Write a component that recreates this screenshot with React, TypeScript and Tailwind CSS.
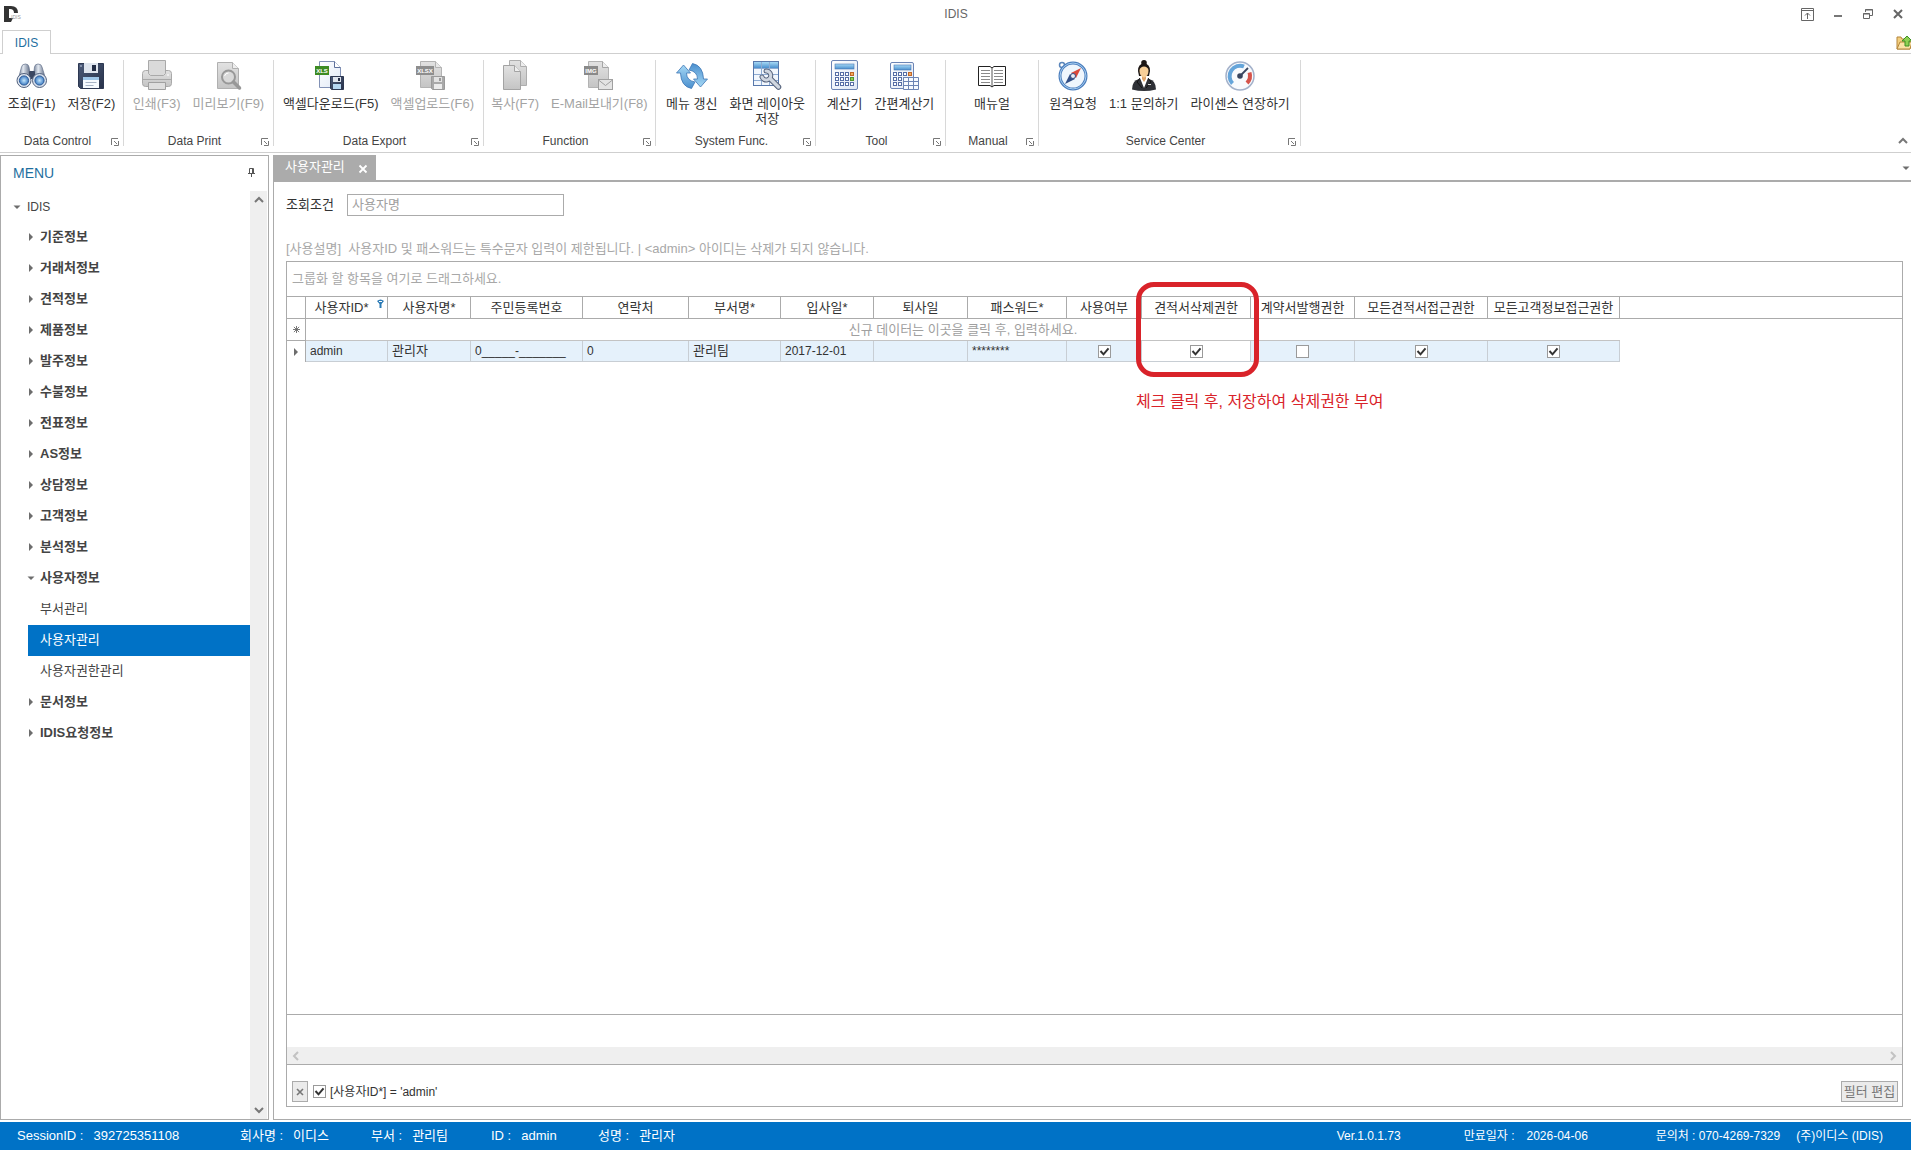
import React, { useState } from "react";
import clsx from "clsx";

interface IRibbonItem {
  label: string;
  icon: React.ReactNode;
  disabled?: boolean;
}

interface IRibbonGroup {
  title: string;
  width: string;
  items: IRibbonItem[];
}

interface IColumn {
  title: string;
  width: string;
  value: string | boolean;
}

function Icon({ children }: { children: React.ReactNode }) {
  return (
    <svg viewBox="0 0 32 32" className="size-8 shrink-0" fill="none">
      {children}
    </svg>
  );
}

function Gradients() {
  return (
    <svg width="0" height="0" className="absolute" aria-hidden="true">
      <defs>
        <linearGradient id="steel" x1="0" y1="0" x2="1" y2="0">
          <stop offset="0" stopColor="#5f6d86" />
          <stop offset="0.4" stopColor="#e3e9f1" />
          <stop offset="1" stopColor="#4c5a75" />
        </linearGradient>
        <radialGradient id="lens">
          <stop offset="0" stopColor="#c4e6fb" />
          <stop offset="1" stopColor="#3d7cc4" />
        </radialGradient>
        <linearGradient id="navy" x1="0" y1="0" x2="1" y2="1">
          <stop offset="0" stopColor="#4b5a78" />
          <stop offset="1" stopColor="#28324a" />
        </linearGradient>
        <linearGradient id="grey" x1="0" y1="0" x2="0" y2="1">
          <stop offset="0" stopColor="#e2e2e2" />
          <stop offset="1" stopColor="#c4c4c4" />
        </linearGradient>
        <linearGradient id="sky" x1="0" y1="0" x2="0" y2="1">
          <stop offset="0" stopColor="#a5d8f5" />
          <stop offset="1" stopColor="#4a8fce" />
        </linearGradient>
        <linearGradient id="paper" x1="0" y1="0" x2="1" y2="1">
          <stop offset="0" stopColor="#ffffff" />
          <stop offset="1" stopColor="#dfe8f6" />
        </linearGradient>
      </defs>
    </svg>
  );
}

function BinocularsIcon() {
  return (
    <Icon>
      <path d="M5.500 7q.5-3 4-3 3 0 3.500 3l2 12-13 1z" fill="url(#steel)" stroke="#64728c" strokeWidth=".7" />
      <path d="M18.500 7q.5-3 3.500-3 3.500 0 4 3l4 13-13-1z" fill="url(#steel)" stroke="#64728c" strokeWidth=".7" />
      <rect x="13" y="11" width="6" height="8" rx="1" fill="#3c4862" />
      <circle cx="8" cy="20.500" r="7" fill="#dbe3ee" stroke="#52617d" />
      <circle cx="8" cy="20.500" r="4.600" fill="url(#lens)" stroke="#2f5c98" />
      <circle cx="23.500" cy="20.500" r="7" fill="#dbe3ee" stroke="#52617d" />
      <circle cx="23.500" cy="20.500" r="4.600" fill="url(#lens)" stroke="#2f5c98" />
    </Icon>
  );
}

function FloppyIcon() {
  return (
    <Icon>
      <path d="M3.500 3.500h25v25h-23l-2-2z" fill="url(#navy)" stroke="#2d3852" />
      <rect x="9" y="3" width="14" height="10" fill="#dfe5ee" />
      <rect x="17" y="5" width="4" height="6" fill="#222c44" />
      <rect x="8" y="17" width="16" height="11" fill="#f6fafe" />
      <rect x="8" y="17" width="16" height="3" fill="#9ec7ea" />
      <path d="M10.500 22.500h11M10.500 25.500h8" stroke="#a7b3c5" />
      <path d="M5 5h2v2h-2z" fill="#8390aa" />
    </Icon>
  );
}

function PrinterIcon() {
  return (
    <Icon>
      <rect x="1.500" y="10.500" width="29" height="16" rx="3" fill="url(#grey)" stroke="#a9a9a9" />
      <path d="M7.500.5h17v13l-2 2h-13l-2-2z" fill="#dadada" stroke="#a9a9a9" />
      <path d="M2 19.500h28" stroke="#a9a9a9" />
      <path d="M7.500 29.500v-7h17v7z" fill="#dedede" stroke="#a0a0a0" />
      <circle cx="27" cy="15" r="1" fill="#f4f4f4" />
    </Icon>
  );
}

function PreviewIcon() {
  return (
    <Icon>
      <path d="M5.500 2.500h15l6 6v20h-21z" fill="url(#grey)" stroke="#b0b0b0" />
      <path d="M20.500 2.500v6h6" fill="#eee" stroke="#b0b0b0" />
      <circle cx="16.500" cy="17" r="6.500" fill="#d9d9d9" stroke="#989898" strokeWidth="2" />
      <path d="m21.500 22 6 6" stroke="#989898" strokeWidth="3.500" strokeLinecap="round" />
      <path d="M12.500 16q1-3 4-3" stroke="#fff" />
    </Icon>
  );
}

function ExcelIcon({ tag, off }: { tag: string; off?: boolean }) {
  const width = off ? 18 : 14;
  return (
    <Icon>
      <path
        d="M4.500 1.500h15l6 6v20h-21z"
        fill={off ? "url(#grey)" : "url(#paper)"}
        stroke={off ? "#b3b3b3" : "#8191b5"}
      />
      <path d="M19.500 1.500v6h6" fill={off ? "#e8e8e8" : "#fff"} stroke={off ? "#b3b3b3" : "#5c6f9b"} />
      <rect x="0" y="6" width={width} height="9" fill={off ? "#8e8e8e" : "#3d8b22"} />
      <text
        x={width / 2}
        y="13"
        fontSize="6"
        fontWeight="700"
        textAnchor="middle"
        fill="#fff"
        fontFamily="Liberation Sans, sans-serif"
      >
        {tag}
      </text>
      <path d="M15.500 16.500h13v13h-12l-1-1z" fill={off ? "#a9a9a9" : "url(#navy)"} stroke={off ? "#9a9a9a" : "#2d3852"} />
      <rect x="18" y="17" width="8" height="5" fill={off ? "#e2e2e2" : "#dfe5ee"} />
      <rect x="23" y="18" width="2" height="3" fill={off ? "#999" : "#222c44"} />
      <rect x="18" y="24" width="8" height="5" fill={off ? "#ececec" : "#b5d7f2"} />
    </Icon>
  );
}

function CopyIcon() {
  return (
    <Icon>
      <path d="M10.500.5h11l6 6v19h-17z" fill="url(#grey)" stroke="#aeaeae" />
      <path d="M21.500.5v6h6" fill="#eee" stroke="#aeaeae" />
      <path d="M4.500 5.500h11l6 6v18h-17z" fill="url(#grey)" stroke="#a3a3a3" />
      <path d="M15.500 5.500v6h6" fill="#eee" stroke="#a3a3a3" />
    </Icon>
  );
}

function MailIcon() {
  return (
    <Icon>
      <path d="M5.500 1.500h14l6 6v20h-20z" fill="url(#grey)" stroke="#b3b3b3" />
      <path d="M19.500 1.500v6h6" fill="#eee" stroke="#a5a5a5" />
      <rect x="1" y="6" width="14" height="9" fill="#8a8a8a" />
      <text
        x="8"
        y="13"
        fontSize="6"
        fontWeight="700"
        textAnchor="middle"
        fill="#fff"
        fontFamily="Liberation Sans, sans-serif"
      >
        IMG
      </text>
      <rect x="15.500" y="19.500" width="14" height="10" fill="#e4e4e4" stroke="#a0a0a0" />
      <path d="m15.500 20 7 5.500 7-5.500" stroke="#a0a0a0" />
    </Icon>
  );
}

function RefreshIcon() {
  const arrow = "M7.500 5 14.500 13H10.500Q10.500 20.500 19 22L15.500 28.500Q5 26.500 4.500 13H.5z";
  return (
    <Icon>
      <path d={arrow} fill="url(#sky)" stroke="#3c76b5" strokeWidth=".8" strokeLinejoin="round" />
      <path
        d={arrow}
        transform="rotate(180 16 16)"
        fill="url(#sky)"
        stroke="#3c76b5"
        strokeWidth=".8"
        strokeLinejoin="round"
      />
    </Icon>
  );
}

function LayoutIcon() {
  return (
    <Icon>
      <rect x="2.500" y="1.500" width="25" height="24" fill="#f2f7fd" stroke="#5878ab" />
      <rect x="3" y="2" width="24" height="6" fill="url(#sky)" />
      <path d="M3 8.500h24M3 14.500h24M3 20.500h24M10.500 2v23M18.500 2v23" stroke="#8eabd2" />
      <g strokeLinecap="round">
        <path d="M15 11a4.500 4.500 0 1 1-4 6" stroke="#56637c" strokeWidth="5" />
        <path d="m19 18.500 8.500 8.500" stroke="#56637c" strokeWidth="5.500" />
        <path d="M15 11a4.500 4.500 0 1 1-4 6" stroke="#cfd6e0" strokeWidth="3" />
        <path d="m19 18.500 8.500 8.500" stroke="#cfd6e0" strokeWidth="3.500" />
      </g>
    </Icon>
  );
}

function CalculatorIcon() {
  return (
    <Icon>
      <rect x="2.500" y=".5" width="26" height="29" rx="1.500" fill="url(#paper)" stroke="#6c84b4" />
      <rect x="6" y="4" width="19" height="5" fill="url(#sky)" stroke="#4a77b3" strokeWidth=".6" />
      {[12, 17, 22].map((y) =>
        [6, 11, 16, 21].map((x) => (
          <rect
            key={`${x}-${y}`}
            x={x + 0.5}
            y={y + 0.5}
            width="3"
            height="3"
            fill={x === 21 && y === 12 ? "#f3ab5c" : x === 21 && y === 17 ? "#8ecb56" : "#fff"}
            stroke={x === 21 && y === 12 ? "#c0662a" : x === 21 && y === 17 ? "#4f9630" : "#566da5"}
          />
        )),
      )}
    </Icon>
  );
}

function EasyCalculatorIcon() {
  return (
    <Icon>
      <rect x="2.500" y="2.500" width="23" height="26" rx="1.500" fill="url(#paper)" stroke="#6c84b4" />
      <rect x="6" y="5" width="17" height="5" fill="url(#sky)" stroke="#4a77b3" strokeWidth=".6" />
      {[12, 17, 22].map((y) =>
        [5, 10, 15, 20].map((x) => (
          <rect
            key={`${x}-${y}`}
            x={x + 0.5}
            y={y + 0.5}
            width="3"
            height="3"
            fill={x === 20 ? "#f3ab5c" : "#fff"}
            stroke={x === 20 ? "#c0662a" : "#566da5"}
          />
        )),
      )}
      <path
        d="M15.500 17.500h15v12h-15zM15.500 21.500h15M15.500 25.500h15M20.500 17.500v12M25.500 17.500v12"
        fill="#f7faff"
        stroke="#6c84b4"
      />
    </Icon>
  );
}

function ManualIcon() {
  return (
    <Icon>
      <path d="M2.500 6.500h11.500l2 1.500 2-1.500h11.500v19H18l-2 1.500-2-1.500H2.500z" fill="#fff" stroke="#222" />
      <path d="M16 8v18" stroke="#555" />
      <path
        d="M5 10.500h9M5 13.500h9M5 16.500h9M5 19.500h9M5 22.500h9M18 10.500h9M18 13.500h9M18 16.500h9M18 19.500h9M18 22.500h9"
        stroke="#8a8a8a"
      />
    </Icon>
  );
}

function CompassIcon() {
  return (
    <Icon>
      <circle cx="5" cy="5" r="2.500" stroke="#5b86bb" strokeWidth="1.500" />
      <circle cx="16" cy="16" r="13" fill="#eff6fd" stroke="#4a7dbd" strokeWidth="3" />
      <circle cx="16" cy="16" r="13" stroke="#a6cdf0" strokeWidth="1" />
      <path d="m24 8-5 10-5-5z" fill="#d9483b" />
      <path d="m8 24 5-10 5 5z" fill="#324f86" />
      <circle cx="16" cy="16" r="2.500" fill="#e7edf6" stroke="#324f86" />
    </Icon>
  );
}

function PersonIcon() {
  return (
    <Icon>
      <circle cx="16" cy="2.800" r="2.800" fill="#1c1715" />
      <path d="M10 11q0-7.500 6-7.500t6 7.500l-1 5h-10z" fill="#1c1715" />
      <path d="M4 29.500q0-9 7-10.500h10q7 1.500 7 10.500-6 1.500-12 1.500t-12-1.500z" fill="#2e3036" />
      <path d="m12 18 4 10 4-10z" fill="#fff" />
      <path d="M14 15h4v4l-2 3-2-3z" fill="#e0a66c" />
      <path d="M11.500 10q1-3.500 4.500-3.500t4.500 3.500q0 7-4.500 7.500-4.500-.5-4.500-7.500z" fill="#f7cf98" />
      <path d="m12 18-3 4 5 6M20 18l3 4-5 6" stroke="#111" />
      <path d="M20 24.500h3" stroke="#d7d7d7" />
    </Icon>
  );
}

function GaugeIcon() {
  return (
    <Icon>
      <circle cx="16" cy="16" r="14" fill="#f8fafd" stroke="#a3b1ca" strokeWidth="1.500" />
      <path d="M8.500 23.500A10.500 10.500 0 0 1 20 6.500" stroke="#65a5da" strokeWidth="4" />
      <path d="M25.500 12.500a10.500 10.500 0 0 1-2.500 10.500" stroke="#d5534a" strokeWidth="4" />
      <path d="m16 16 8-8" stroke="#38455f" strokeWidth="1.800" />
      <circle cx="16" cy="16" r="2.800" fill="#38455f" />
    </Icon>
  );
}

const groups: IRibbonGroup[] = [
  {
    title: "Data Control",
    width: "w-[124px]",
    items: [
      { label: "조회(F1)", icon: <BinocularsIcon /> },
      { label: "저장(F2)", icon: <FloppyIcon /> },
    ],
  },
  {
    title: "Data Print",
    width: "w-[150px]",
    items: [
      { label: "인쇄(F3)", icon: <PrinterIcon />, disabled: true },
      { label: "미리보기(F9)", icon: <PreviewIcon />, disabled: true },
    ],
  },
  {
    title: "Data Export",
    width: "w-[210px]",
    items: [
      { label: "액셀다운로드(F5)", icon: <ExcelIcon tag="XLS" /> },
      { label: "액셀업로드(F6)", icon: <ExcelIcon tag="XLSX" off />, disabled: true },
    ],
  },
  {
    title: "Function",
    width: "w-[172px]",
    items: [
      { label: "복사(F7)", icon: <CopyIcon />, disabled: true },
      { label: "E-Mail보내기(F8)", icon: <MailIcon />, disabled: true },
    ],
  },
  {
    title: "System Func.",
    width: "w-[160px]",
    items: [
      { label: "메뉴 갱신", icon: <RefreshIcon /> },
      { label: "화면 레이아웃\n저장", icon: <LayoutIcon /> },
    ],
  },
  {
    title: "Tool",
    width: "w-[130px]",
    items: [
      { label: "계산기", icon: <CalculatorIcon /> },
      { label: "간편계산기", icon: <EasyCalculatorIcon /> },
    ],
  },
  {
    title: "Manual",
    width: "w-[93px]",
    items: [{ label: "매뉴얼", icon: <ManualIcon /> }],
  },
  {
    title: "Service Center",
    width: "w-[262px]",
    items: [
      { label: "원격요청", icon: <CompassIcon /> },
      { label: "1:1 문의하기", icon: <PersonIcon /> },
      { label: "라이센스 연장하기", icon: <GaugeIcon /> },
    ],
  },
];

const menusBefore = [
  "기준정보",
  "거래처정보",
  "견적정보",
  "제품정보",
  "발주정보",
  "수불정보",
  "전표정보",
  "AS정보",
  "상담정보",
  "고객정보",
  "분석정보",
];
const userMenus = ["부서관리", "사용자관리", "사용자권한관리"];
const menusAfter = ["문서정보", "IDIS요청정보"];

const columns: IColumn[] = [
  { title: "사용자ID*", width: "w-[82px]", value: "admin" },
  { title: "사용자명*", width: "w-[83px]", value: "관리자" },
  { title: "주민등록번호", width: "w-[112px]", value: "0_____-_______" },
  { title: "연락처", width: "w-[106px]", value: "0" },
  { title: "부서명*", width: "w-[92px]", value: "관리팀" },
  { title: "입사일*", width: "w-[93px]", value: "2017-12-01" },
  { title: "퇴사일", width: "w-[94px]", value: "" },
  { title: "패스워드*", width: "w-[99px]", value: "********" },
  { title: "사용여부", width: "w-[75px]", value: true },
  { title: "견적서삭제권한", width: "w-[109px]", value: true },
  { title: "계약서발행권한", width: "w-[104px]", value: false },
  { title: "모든견적서접근권한", width: "w-[133px]", value: true },
  { title: "모든고객정보접근권한", width: "w-[132px]", value: true },
];

const FOCUSED = "견적서삭제권한";

function Check({ id, label, checked }: { id?: string; label?: string; checked: boolean }) {
  return (
    <span className="relative inline-flex size-[13px] shrink-0 align-middle">
      <input
        id={id}
        type="checkbox"
        aria-label={label}
        defaultChecked={checked}
        className="peer size-[13px] appearance-none border border-[#9a9a9a] bg-white"
      />
      <svg
        viewBox="0 0 13 13"
        className="pointer-events-none absolute inset-0 hidden size-[13px] peer-checked:block"
        fill="none"
      >
        <path d="m2.500 6 3 3.300 5-6" stroke="#333" strokeWidth="2" />
      </svg>
    </span>
  );
}

function Launcher() {
  return (
    <svg viewBox="0 0 8 8" className="size-2" fill="none">
      <path d="M.5 7V.5H7M3 3l3 3M7.500 3v4.500H3" stroke="#777" />
    </svg>
  );
}

function Arrow({ open }: { open?: boolean }) {
  return (
    <svg viewBox="0 0 8 8" className="size-2 shrink-0" fill="#6d6d6d">
      {open ? <path d="M.5 2.500h7L4 6z" /> : <path d="M2 0v8l4-4z" />}
    </svg>
  );
}

function Chevron({ path, color }: { path: string; color: string }) {
  return (
    <svg viewBox="0 0 10 10" className="size-[10px]" fill="none">
      <path d={path} stroke={color} strokeWidth="2" />
    </svg>
  );
}

function TitleBar() {
  return (
    <header className="flex h-[30px] shrink-0 items-center pb-0.5">
      <div className="flex flex-1 items-center pl-1">
        <svg viewBox="0 0 18 18" className="size-[18px]">
          <path d="M0 1h7q7 0 7 7H10q0-4-4-4H5v13H0z" fill="#333" />
          <path d="M5 13h4l-2 4H0z" fill="#333" />
          <text x="7" y="14" fontSize="5" fill="#999" fontFamily="Liberation Sans, sans-serif">
            IDIS
          </text>
        </svg>
      </div>
      <h1 className="pl-1 text-xs text-[#666]">IDIS</h1>
      <div className="flex flex-1 items-center justify-end gap-[18px] pr-[7px]">
        <button aria-label="Full screen">
          <svg viewBox="0 0 13 13" className="size-[13px]" fill="none" stroke="#666">
            <path d="M.5.5h12v12H.5zM.5 2.500h12M6.500 11V5M4 7.500 6.500 5 9 7.500" />
          </svg>
        </button>
        <button aria-label="Minimize">
          <svg viewBox="0 0 12 12" className="size-3">
            <path d="M2 7h8v2H2z" fill="#777" />
          </svg>
        </button>
        <button aria-label="Restore">
          <svg viewBox="0 0 12 12" className="size-3" fill="none" stroke="#666">
            <path d="M3.500 4V1.500h7v6H8M3 2h8M1.500 5.500h6v5h-6zM1 6h7" />
          </svg>
        </button>
        <button aria-label="Close">
          <svg viewBox="0 0 12 12" className="size-3" fill="none">
            <path d="m2 2 8 8M10 2l-8 8" stroke="#666" strokeWidth="2" />
          </svg>
        </button>
      </div>
    </header>
  );
}

function Ribbon() {
  return (
    <>
      <nav className="flex h-6 shrink-0 justify-between border-b border-[#cfcfcf] pl-0.5">
        <button className="-mb-px h-6 w-[49px] border border-b-0 border-[#cfcfcf] bg-white text-xs text-[#1f6f9f]">
          IDIS
        </button>
        <button aria-label="Open folder" className="flex w-[15px] items-center overflow-hidden">
          <svg viewBox="0 0 16 16" className="size-4 shrink-0">
            <path d="M1 3h4l1 2h8v10H1z" fill="#f3cf7e" stroke="#b5853a" />
            <path d="m1 15 3-7h12l-2 7z" fill="#fbe3a5" stroke="#b5853a" />
            <path d="m11 2 5 5h-3v5H9V7H6z" fill="#8fd052" stroke="#3f8f25" />
          </svg>
        </button>
      </nav>
      <div className="flex h-[99px] shrink-0 border-b border-[#cfcfcf] py-[6px]">
        {groups.map((group) => (
          <section
            key={group.title}
            className={clsx("flex shrink-0 flex-col justify-between border-r border-[#d8d8d8]", group.width)}
          >
            <div className="flex justify-center gap-3">
              {group.items.map((item) => (
                <button
                  key={item.label}
                  disabled={item.disabled}
                  className={clsx(
                    "flex flex-col items-center gap-1 text-[13px] leading-[15px] whitespace-pre",
                    item.disabled ? "text-[#a3a3a3]" : "text-[#333]",
                  )}
                >
                  {item.icon}
                  <span>{item.label}</span>
                </button>
              ))}
            </div>
            <div className="flex items-center pr-1 pl-1 text-xs leading-[9px] text-[#444]">
              <span className="flex-1 text-center">{group.title}</span>
              <button aria-label={`${group.title} options`}>
                <Launcher />
              </button>
            </div>
          </section>
        ))}
        <button aria-label="Collapse ribbon" className="mr-[3px] ml-auto self-end">
          <Chevron path="M1 7l4-4 4 4" color="#777" />
        </button>
      </div>
    </>
  );
}

function Sidebar() {
  const [selected, setSelected] = useState("사용자관리");

  const branch = (name: string, open?: boolean) => (
    <li key={name}>
      <button className="flex h-[31px] w-full items-center gap-[5px] pb-px pl-[26px] font-bold">
        <Arrow open={open} />
        {name}
      </button>
    </li>
  );

  return (
    <aside className="flex w-[269px] shrink-0 flex-col border border-[#ababab]">
      <div className="flex h-[35px] shrink-0 items-center justify-between px-3 pb-0.5">
        <h2 className="text-sm text-[#1f6f9f]">MENU</h2>
        <button aria-label="Pin menu">
          <svg viewBox="0 0 9 9" className="size-[9px]" fill="none" stroke="#555">
            <path d="M2.500 5V.5h4V5M1 5.500h7M4.500 6v3M5.500 1v4" />
          </svg>
        </button>
      </div>
      <div className="flex min-h-0 flex-1">
        <ul className="flex-1 text-[13px] text-[#444]">
          <li>
            <button className="flex h-[31px] w-full items-center gap-[6px] pl-3 text-xs">
              <Arrow open />
              IDIS
            </button>
          </li>
          {menusBefore.map((name) => branch(name))}
          {branch("사용자정보", true)}
          {userMenus.map((name) => (
            <li key={name} className="pl-[27px]">
              <button
                onClick={() => setSelected(name)}
                className={clsx(
                  "flex h-[31px] w-full items-center pb-px pl-3",
                  selected === name && "bg-[#0072c6] text-white",
                )}
              >
                {name}
              </button>
            </li>
          ))}
          {menusAfter.map((name) => branch(name))}
        </ul>
        <div className="mr-px flex w-[17px] flex-col items-center justify-between bg-[#efefef] py-1">
          <Chevron path="M1 7l4-4 4 4" color="#777" />
          <Chevron path="M1 3l4 4 4-4" color="#777" />
        </div>
      </div>
    </aside>
  );
}

function Grid() {
  return (
    <div className="flex min-h-0 flex-1 flex-col border border-[#ababab]">
      <div className="flex h-[34px] shrink-0 items-center pl-[5px] text-[13px] text-[#a8a8a8]">
        그룹화 할 항목을 여기로 드래그하세요.
      </div>
      <div className="min-h-0 flex-1">
        <table className="w-full table-fixed border-separate border-spacing-0 text-[13px] leading-4 text-[#333]">
          <colgroup>
            <col className="w-[19px]" />
            {columns.map((column) => (
              <col key={column.title} className={column.width} />
            ))}
            <col />
          </colgroup>
          <thead>
            <tr className="h-[23px]">
              <th className="border-y border-r border-[#ababab] p-0" />
              {columns.map(({ title }, i) => (
                <th
                  key={title}
                  className={clsx(
                    "relative border-y border-r border-[#ababab] p-0 font-normal whitespace-nowrap",
                    i === 0 && "pr-[10px]",
                  )}
                >
                  {title}
                  {i === 0 && (
                    <svg viewBox="0 0 7 9" className="absolute top-0.5 right-[3px] h-[9px] w-[7px]" fill="none">
                      <path d="M0 2q3.500-3 7 0L4.500 5v4h-2V5z" fill="#2a7ab5" />
                      <path d="M2 2.500h3" stroke="#fff" />
                    </svg>
                  )}
                  {title === FOCUSED && (
                    <div className="pointer-events-none absolute -top-[15px] -left-[6px] z-10 h-[95px] w-[123px] rounded-[18px] border-[5px] border-[#d9232a]">
                      <p className="absolute top-[105px] -left-[5px] text-base leading-5 text-[#d9232a]">
                        체크 클릭 후, 저장하여 삭제권한 부여
                      </p>
                    </div>
                  )}
                </th>
              ))}
              <th className="border-y border-[#ababab] p-0" />
            </tr>
          </thead>
          <tbody>
            <tr className="h-[22px]">
              <td className="border-r border-b border-[#ababab] p-0">
                <svg viewBox="0 0 8 8" className="mx-auto size-[7px]" fill="none" stroke="#666">
                  <path d="M4 0v8M0 4h8M1 1l6 6M7 1 1 7" />
                </svg>
              </td>
              <td colSpan={13} className="border-b border-[#c3c3c3] p-0 text-center text-[#a0a0a0]">
                신규 데이터는 이곳을 클릭 후, 입력하세요.
              </td>
              <td />
            </tr>
            <tr className="h-[21px]">
              <td className="border-r border-[#ababab] p-0">
                <span className="flex justify-center">
                  <Arrow />
                </span>
              </td>
              {columns.map(({ title, value }) => (
                <td
                  key={title}
                  className={clsx(
                    "border-r border-b border-[#c8ced4] py-0",
                    typeof value === "string" ? "px-1" : "px-0 text-center leading-[0]",
                    title === FOCUSED ? "bg-white" : "bg-[#e5f1fb]",
                    typeof value === "string" && /^[\x20-\x7e]*$/.test(value) && "text-xs",
                  )}
                >
                  {typeof value === "string" ? value : <Check label={title} checked={value} />}
                </td>
              ))}
              <td />
            </tr>
          </tbody>
        </table>
      </div>
      <div className="flex h-[50px] shrink-0 flex-col justify-end border-t border-[#ababab]">
        <div className="flex h-[17px] items-center justify-between bg-[#efefef] px-1">
          <Chevron path="M7 1L3 5l4 4" color="#c2c2c2" />
          <Chevron path="M3 1l4 4-4 4" color="#c2c2c2" />
        </div>
      </div>
      <div className="flex h-[42px] shrink-0 items-center border-t border-[#ababab] pt-4 pr-1 pb-1 pl-[5px] text-[#333]">
        <button
          aria-label="Clear filter"
          className="flex h-[21px] w-4 items-center justify-center border border-[#ababab] bg-[#ebebeb]"
        >
          <svg viewBox="0 0 8 8" className="size-2" fill="none">
            <path d="m1 1 6 6M7 1 1 7" stroke="#777" strokeWidth="1.600" />
          </svg>
        </button>
        <label htmlFor="filter" className="ml-[5px] flex items-center gap-1 text-xs">
          <Check id="filter" checked />
          [사용자ID*] = 'admin'
        </label>
        <button className="ml-auto h-[21px] w-[57px] border border-[#ababab] bg-[#ebebeb] text-[13px] leading-[19px] whitespace-nowrap text-[#777]">
          필터 편집
        </button>
      </div>
    </div>
  );
}

function Workspace() {
  return (
    <main className="flex min-w-0 flex-1 flex-col">
      <div className="flex h-[25px] shrink-0 items-center justify-between">
        <div className="flex h-full w-[103px] items-center justify-between bg-[#ababab] pr-2 pb-0.5 pl-3 text-[13px] text-white">
          사용자관리
          <button aria-label="Close tab" className="pt-1">
            <svg viewBox="0 0 10 10" className="size-[10px]" fill="none">
              <path d="m1.500 1.500 7 7M8.500 1.500l-7 7" stroke="#fff" strokeWidth="1.800" />
            </svg>
          </button>
        </div>
        <button aria-label="Tab list" className="pr-px">
          <Arrow open />
        </button>
      </div>
      <div className="flex min-h-0 flex-1 flex-col border-t-2 border-b border-l border-[#ababab] pt-3 pr-2 pb-3 pl-3">
        <div className="flex h-[22px] shrink-0 items-center text-[13px] text-[#333]">
          <label htmlFor="user-name" className="w-[61px]">
            조회조건
          </label>
          <input
            id="user-name"
            placeholder="사용자명"
            className="h-[22px] w-[217px] border border-[#ababab] px-1 pb-0.5 outline-none placeholder:text-[#a0a0a0]"
          />
        </div>
        <p className="mt-[23px] mb-0.5 text-[13px] leading-5 whitespace-pre text-[#a8a8a8]">
          {"[사용설명]  사용자ID 및 패스워드는 특수문자 입력이 제한됩니다. | <admin> 아이디는 삭제가 되지 않습니다."}
        </p>
        <Grid />
      </div>
    </main>
  );
}

function StatusBar() {
  const items = [
    { label: "SessionID :", value: "392725351108", width: "w-[223px]" },
    { label: "회사명 :", value: "이디스", width: "w-[131px]" },
    { label: "부서 :", value: "관리팀", width: "w-[120px]" },
    { label: "ID :", value: "admin", width: "w-[107px]" },
    { label: "성명 :", value: "관리자", width: "w-[107px]" },
  ];

  return (
    <footer className="flex h-7 shrink-0 items-center bg-[#0072c6] pr-7 pl-[17px] text-xs whitespace-nowrap text-white">
      {items.map((item) => (
        <div key={item.label} className={clsx("flex gap-[10px] text-[13px]", item.width)}>
          <span>{item.label}</span>
          <span>{item.value}</span>
        </div>
      ))}
      <span className="ml-auto w-[127px]">Ver.1.0.1.73</span>
      <div className="flex w-[192px] gap-3">
        <span>만료일자 :</span>
        <span>2026-04-06</span>
      </div>
      <span className="mr-4">문의처 : 070-4269-7329</span>
      <span>(주)이디스 (IDIS)</span>
    </footer>
  );
}

export default function App() {
  return (
    <div className="flex h-screen flex-col overflow-hidden bg-white font-['Liberation_Sans','Noto_Sans_CJK_KR',sans-serif]">
      <Gradients />
      <TitleBar />
      <Ribbon />
      <div className="flex min-h-0 flex-1 gap-1 py-0.5">
        <Sidebar />
        <Workspace />
      </div>
      <StatusBar />
    </div>
  );
}
